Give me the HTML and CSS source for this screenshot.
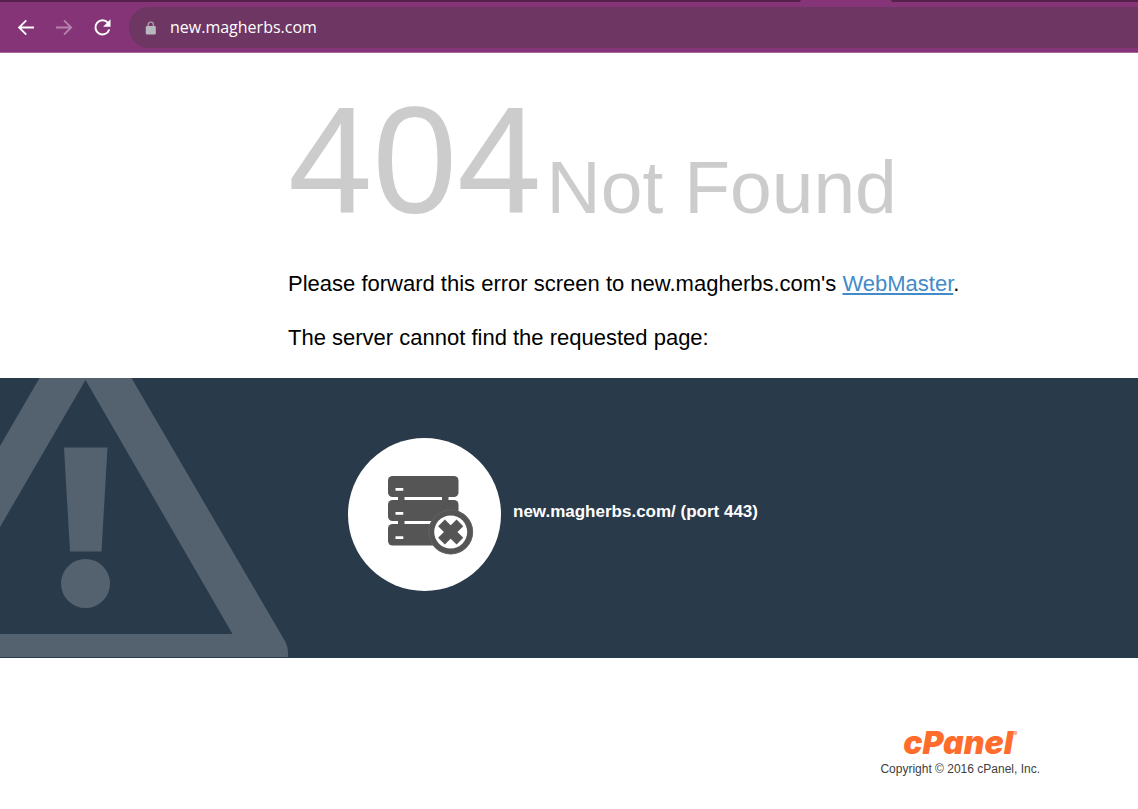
FILE: index.html
```html
<!DOCTYPE html>
<html lang="en">

<head>
  <meta charset="UTF-8">
  <meta name="viewport" content="width=device-width, initial-scale=1.0">
  <title>404 Not Found</title>
  <link rel="stylesheet" href="styles.css">
</head>

<body>
  <header class="browser">
    <div class="tab-strip">
      <div class="active-tab"></div>
    </div>
    <div class="toolbar">
      <button class="nav-btn" type="button" aria-label="Back">
        <svg width="18" height="18" viewBox="0 0 18 18" fill="none" stroke="currentColor" stroke-width="1.8">
          <path d="M17 8.5H2.5M9.3 1.3L2.1 8.5l7.2 7.2" />
        </svg>
      </button>
      <button class="nav-btn disabled" type="button" aria-label="Forward">
        <svg width="18" height="18" viewBox="0 0 18 18" fill="none" stroke="currentColor" stroke-width="1.8">
          <path d="M1 8.5h14.7M9 1.3l7.2 7.2L9 15.7" />
        </svg>
      </button>
      <button class="nav-btn" type="button" aria-label="Reload">
        <svg width="18" height="18" viewBox="0 0 18 18">
          <path d="M15 3.8A7.1 7.1 0 1 0 16.3 10.5" fill="none" stroke="currentColor" stroke-width="2" />
          <path d="M17.5 0.3v7.4h-7.4z" fill="currentColor" />
        </svg>
      </button>
      <div class="address-bar">
        <svg width="12" height="14" viewBox="0 0 12 14">
          <path d="M3.2 6V3.7a2.6 2.6 0 0 1 5.2 0V6" fill="none" stroke="#a89bab" stroke-width="1.4" />
          <rect x="0.8" y="5" width="10" height="8.4" rx="1.2" fill="#b8b8bf" />
        </svg>
        <input type="text" aria-label="Address" value="new.magherbs.com">
      </div>
    </div>
  </header>

  <main>
    <section class="message">
      <h1><span class="status-code">404</span> <span class="status-reason">Not Found</span></h1>
      <p>Please forward this error screen to new.magherbs.com's <a href="#">WebMaster</a>.</p>
      <p>The server cannot find the requested page:</p>
    </section>

    <section class="additional-info">
      <svg class="warning" width="288" height="280" viewBox="0 0 288 280" fill="#54626f">
        <path fill-rule="evenodd" d="M0 68L39.5 0h92L285.5 264Q288 269 288 274V279H0V256H232.5L85.5 2 0 149z" />
        <path d="M64 69.5h43.5l-6 104H70z" />
        <circle cx="85.5" cy="205.5" r="24.5" />
      </svg>
      <div class="info-row">
        <svg class="info-image" width="153" height="153" viewBox="0 0 153 153">
          <circle cx="76.5" cy="76.5" r="76.5" fill="#fff" />
          <g fill="#555">
            <rect x="40" y="38" width="70.5" height="21" rx="4.5" />
            <rect x="40" y="62" width="70.5" height="21" rx="4.5" />
            <rect x="40" y="86" width="70.5" height="21.5" rx="4.5" />
            <path d="M50 58h6.5v30H50zM94 58h6.5v30H94z" />
            <circle cx="102.7" cy="94" r="22.3" />
          </g>
          <path d="M47.5 50h7.8v2.7h-7.8zM47.5 74h7.8v2.7h-7.8zM47.5 98.2h7.8v2.7h-7.8z" fill="#fff" />
          <circle cx="102.7" cy="94" r="22" fill="none" stroke="#666" stroke-width="0.8" />
          <circle cx="102.7" cy="94" r="16.5" fill="#fff" />
          <path d="M93.5 84.8l18.4 18.4M111.9 84.8L93.5 103.2" stroke="#555" stroke-width="9.5" />
        </svg>
        <strong class="info-server">new.magherbs.com/ (port 443)</strong>
      </div>
    </section>
  </main>

  <footer>
    <a href="#" class="copyright">
      <span class="logo">cPanel<sup>®</sup></span>
      <span>Copyright © 2016 cPanel, Inc.</span>
    </a>
  </footer>
</body>

</html>
```
FILE: styles.css
```css
* {
  box-sizing: border-box;
  margin: 0;
  padding: 0;
}

body {
  font-family: Arial, "Liberation Sans", sans-serif;
  background: #fff;
  color: #000;
}

/* Browser bar */
.browser {
  background: #853577;
  border-bottom: 1px solid #a9659d;
  overflow: hidden;
}

.tab-strip {
  display: flex;
  justify-content: flex-end;
  height: 2px;
  background: #55204a;
}

.active-tab {
  width: 92px;
  margin-right: 246px;
  background: #853577;
  border-radius: 3px 3px 0 0;
}

.toolbar {
  display: flex;
  align-items: center;
  gap: 20px;
  padding: 5px 0 4px 17px;
}

.nav-btn {
  width: 18px;
  height: 18px;
  border: none;
  background: none;
  color: #fff;
  cursor: pointer;
}

.nav-btn svg {
  display: block;
}

.nav-btn.disabled {
  color: #b583ad;
}

.address-bar {
  flex: 1;
  display: flex;
  align-items: center;
  gap: 13px;
  height: 41px;
  margin-left: -2px;
  padding-left: 16px;
  background: #6d3663;
  border-radius: 20px 0 0 20px;
}

.address-bar input {
  flex: 1;
  padding-bottom: 2px;
  border: none;
  outline: none;
  background: none;
  color: #fff;
  font-family: "Segoe UI", "Open Sans", sans-serif;
  font-size: 16px;
}

/* Error message */
.message {
  padding: 24px 20px 26px 288px;
}

.message h1 {
  display: flex;
  align-items: baseline;
  gap: 5px;
  font-weight: normal;
  color: #ccc;
}

.status-code {
  font-size: 152px;
  line-height: 167px;
}

.status-reason {
  font-size: 75px;
  line-height: 84px;
}

.message p {
  margin-top: 26px;
  font-size: 22px;
  line-height: 28px;
}

.message a {
  color: #428bca;
}

/* Server info */
.additional-info {
  position: relative;
  padding: 60px 20px 67px 348px;
  background: #293a4a;
}

.warning {
  position: absolute;
  left: 0;
  bottom: 0;
}

.info-row {
  display: flex;
  align-items: center;
  gap: 12px;
}

.info-server {
  padding-bottom: 6px;
  font-size: 17px;
  line-height: 20px;
  color: #fff;
}

/* Footer */
footer {
  display: flex;
  justify-content: flex-end;
  padding: 68px 98px 30px 20px;
}

.copyright {
  display: flex;
  flex-direction: column;
  align-items: center;
  font-size: 12px;
  line-height: 18px;
  color: #404040;
  text-decoration: none;
}

.logo {
  font-family: Inter, sans-serif;
  font-size: 32px;
  font-style: italic;
  font-weight: 900;
  line-height: 34px;
  color: #ff6c2c;
}

.logo sup {
  font-size: 6px;
  font-weight: normal;
  line-height: 6px;
  vertical-align: 18px;
}
```
